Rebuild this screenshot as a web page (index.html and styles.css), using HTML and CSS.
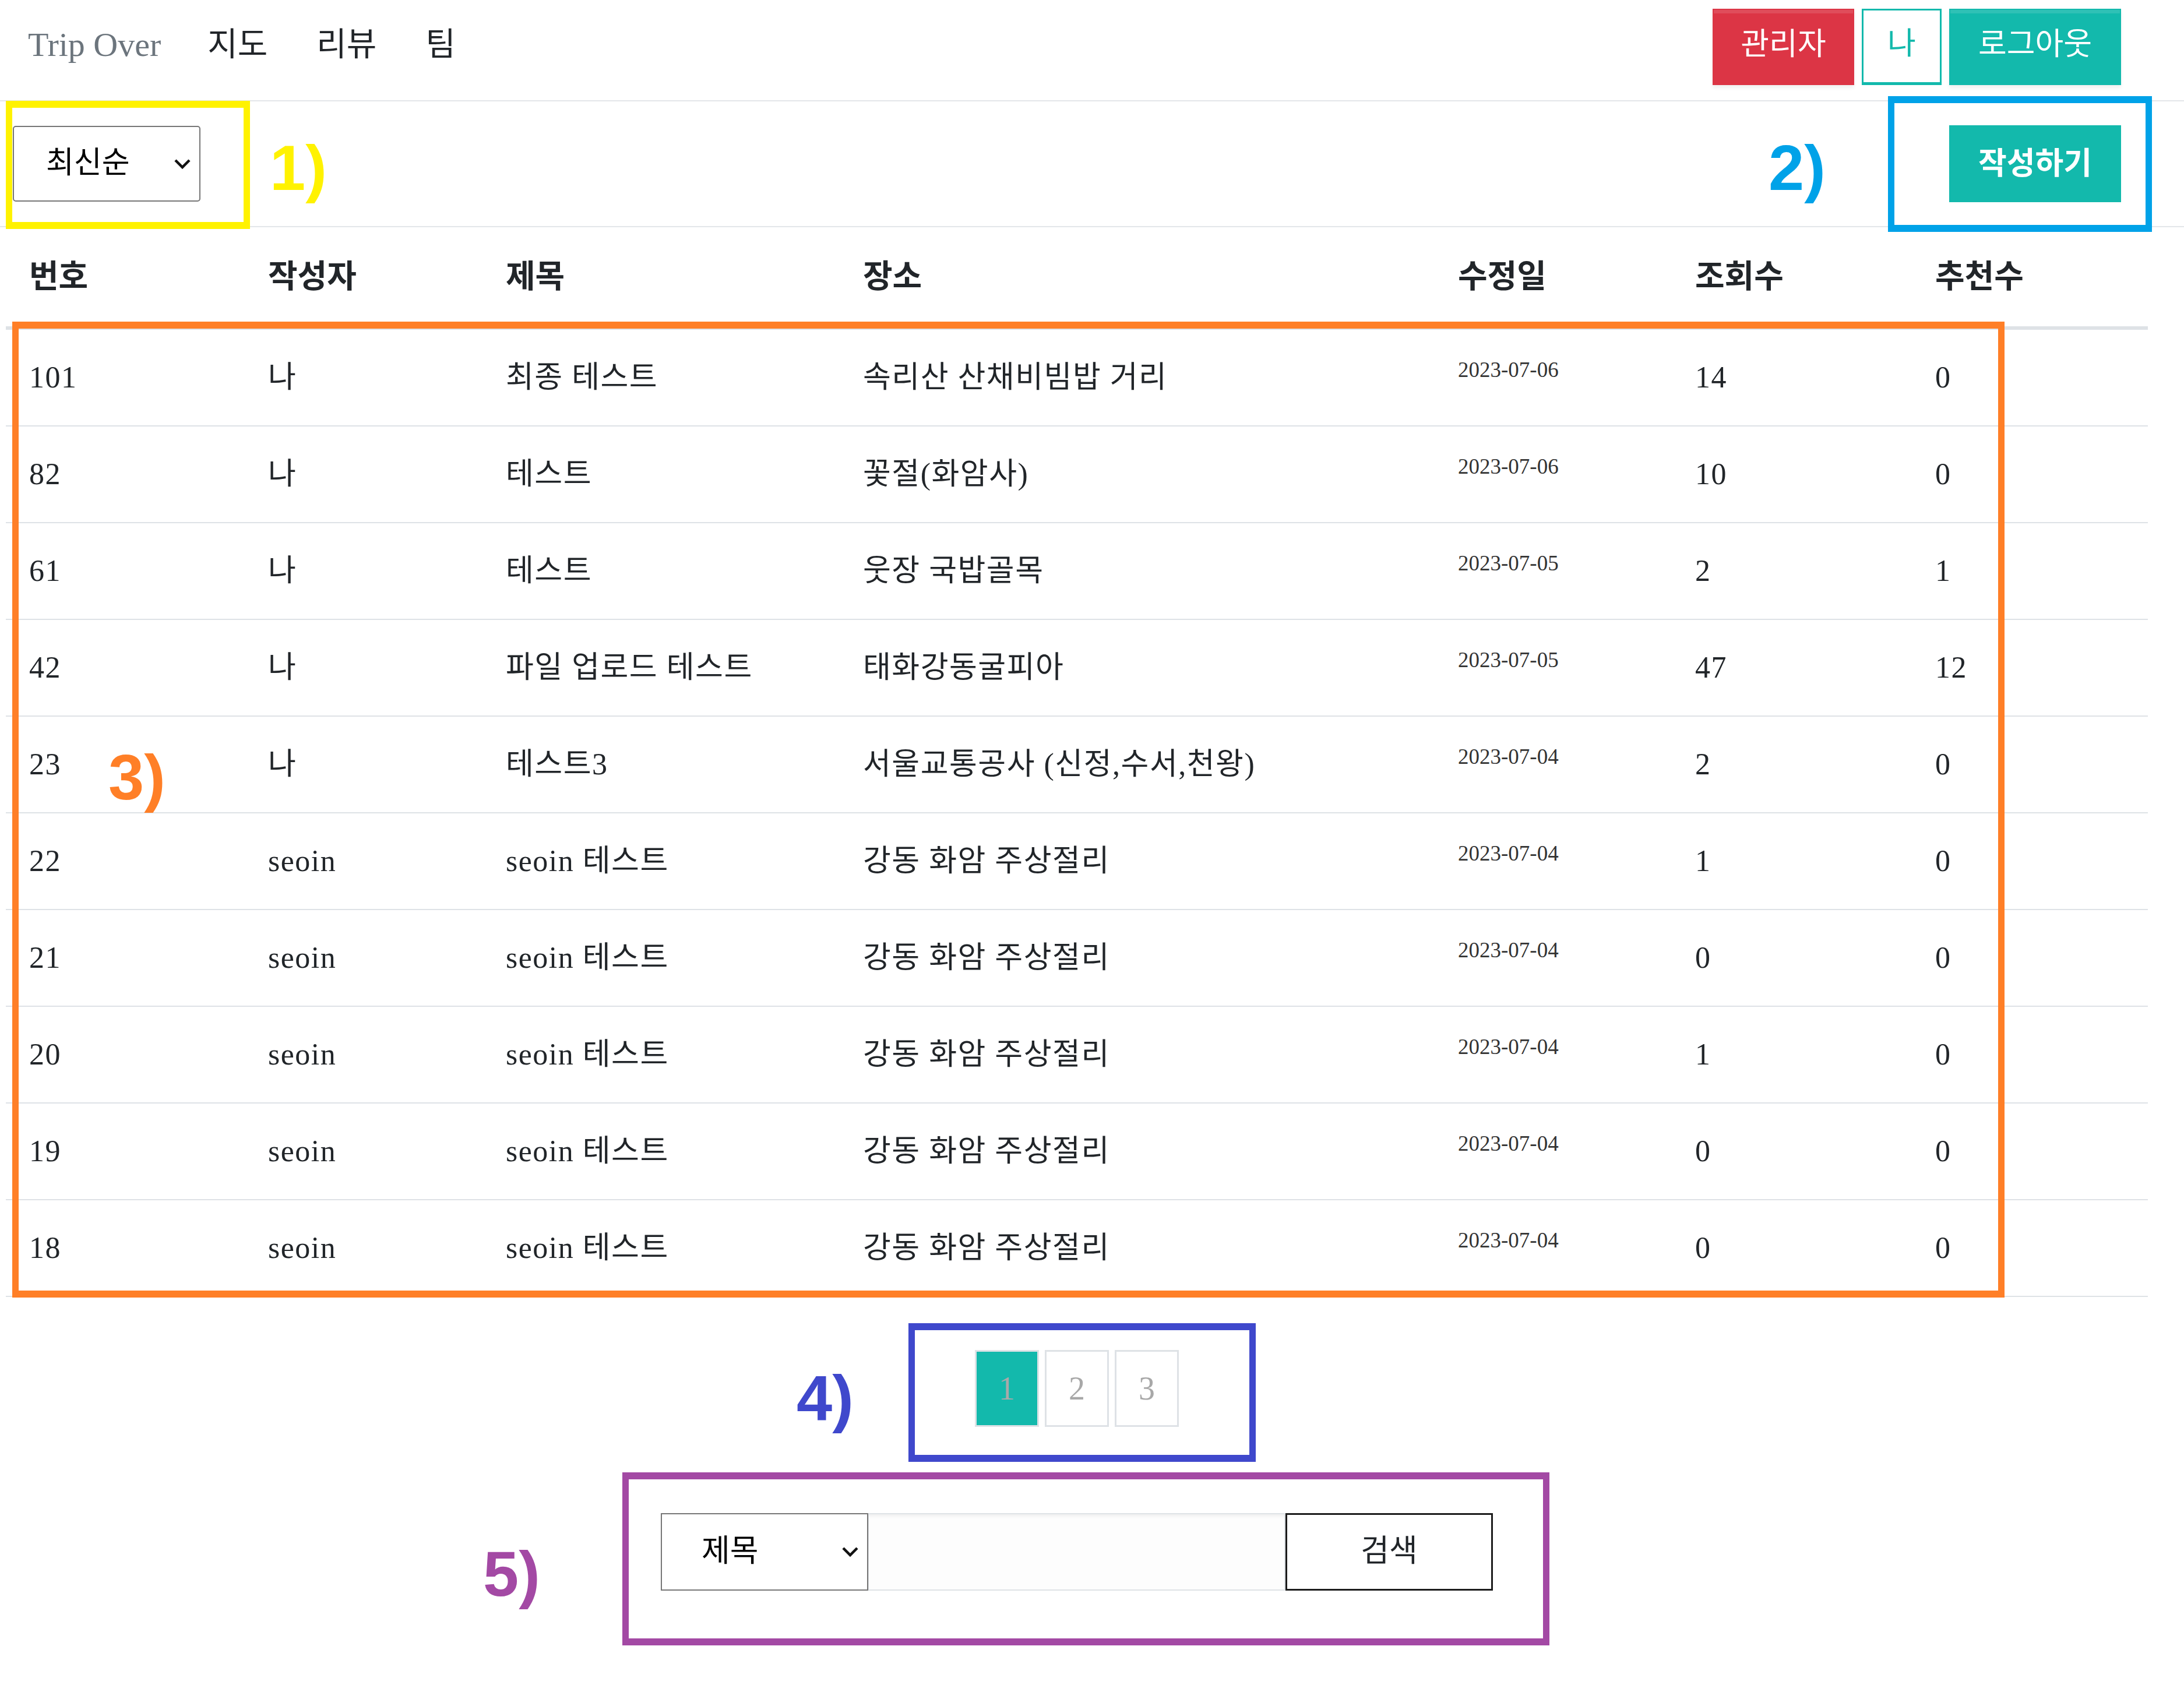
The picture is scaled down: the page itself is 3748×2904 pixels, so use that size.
FILE: index.html
```html
<!DOCTYPE html>
<html lang="ko">
<head>
<meta charset="utf-8">
<title>Trip Over - 리뷰</title>
<link rel="stylesheet" href="styles.css">
</head>
<body>
<div class="page">
  <header class="topnav">
    <a class="brand" href="#">Trip Over</a>
    <ul class="menu">
      <li><a href="#">지도</a></li>
      <li><a href="#">리뷰</a></li>
      <li><a href="#">팀</a></li>
    </ul>
    <div class="account">
      <button class="btn btn-danger btn-admin" type="button">관리자</button>
      <button class="btn btn-outline" type="button">나</button>
      <button class="btn btn-teal btn-logout" type="button">로그아웃</button>
    </div>
  </header>

  <div class="toolbar">
    <div class="select sort-select">
      <span class="select-label">최신순</span>
      <svg class="chev" width="30" height="19" viewBox="0 0 30 19"><path d="M3 3 L15 15 L27 3" fill="none" stroke="#111" stroke-width="4.5"/></svg>
    </div>
    <button class="btn btn-teal btn-write" type="button">작성하기</button>
  </div>

  <table class="board">
    <colgroup>
      <col class="c-no"><col class="c-writer"><col class="c-title"><col class="c-place"><col class="c-date"><col class="c-views"><col class="c-likes">
    </colgroup>
    <thead>
      <tr><th>번호</th><th>작성자</th><th>제목</th><th>장소</th><th>수정일</th><th>조회수</th><th>추천수</th></tr>
    </thead>
    <tbody>
      <tr><td>101</td><td>나</td><td>최종 테스트</td><td>속리산 산채비빔밥 거리</td><td><span class="date">2023-07-06</span></td><td>14</td><td>0</td></tr>
      <tr><td>82</td><td>나</td><td>테스트</td><td>꽃절(화암사)</td><td><span class="date">2023-07-06</span></td><td>10</td><td>0</td></tr>
      <tr><td>61</td><td>나</td><td>테스트</td><td>웃장 국밥골목</td><td><span class="date">2023-07-05</span></td><td>2</td><td>1</td></tr>
      <tr><td>42</td><td>나</td><td>파일 업로드 테스트</td><td>태화강동굴피아</td><td><span class="date">2023-07-05</span></td><td>47</td><td>12</td></tr>
      <tr><td>23</td><td>나</td><td>테스트3</td><td>서울교통공사 (신정,수서,천왕)</td><td><span class="date">2023-07-04</span></td><td>2</td><td>0</td></tr>
      <tr><td>22</td><td>seoin</td><td>seoin 테스트</td><td>강동 화암 주상절리</td><td><span class="date">2023-07-04</span></td><td>1</td><td>0</td></tr>
      <tr><td>21</td><td>seoin</td><td>seoin 테스트</td><td>강동 화암 주상절리</td><td><span class="date">2023-07-04</span></td><td>0</td><td>0</td></tr>
      <tr><td>20</td><td>seoin</td><td>seoin 테스트</td><td>강동 화암 주상절리</td><td><span class="date">2023-07-04</span></td><td>1</td><td>0</td></tr>
      <tr><td>19</td><td>seoin</td><td>seoin 테스트</td><td>강동 화암 주상절리</td><td><span class="date">2023-07-04</span></td><td>0</td><td>0</td></tr>
      <tr><td>18</td><td>seoin</td><td>seoin 테스트</td><td>강동 화암 주상절리</td><td><span class="date">2023-07-04</span></td><td>0</td><td>0</td></tr>
    </tbody>
  </table>

  <nav class="pagination">
    <a class="page-item active" href="#">1</a>
    <a class="page-item" href="#">2</a>
    <a class="page-item" href="#">3</a>
  </nav>

  <form class="search">
    <div class="select search-select">
      <span class="select-label">제목</span>
      <svg class="chev" width="30" height="19" viewBox="0 0 30 19"><path d="M3 3 L15 15 L27 3" fill="none" stroke="#111" stroke-width="4.5"/></svg>
    </div>
    <input class="search-input" type="text" aria-label="검색어">
    <button class="search-btn" type="button">검색</button>
  </form>

  <div class="annot annot-1"></div>
  <div class="annot annot-2"></div>
  <div class="annot annot-3"></div>
  <div class="annot annot-4"></div>
  <div class="annot annot-5"></div>
  <span class="label label-1">1)</span>
  <span class="label label-2">2)</span>
  <span class="label label-3">3)</span>
  <span class="label label-4">4)</span>
  <span class="label label-5">5)</span>
</div>
</body>
</html>
```

FILE: styles.css
```css
* { box-sizing: border-box; }

html, body {
  margin: 0;
  padding: 0;
  background: #ffffff;
}

body {
  font-family: "Liberation Serif", "Noto Sans CJK KR", serif;
  color: #212529;
}

.page {
  position: relative;
  width: 3748px;
  min-height: 2904px;
}

a { color: inherit; text-decoration: none; }

/* ---------- top navigation ---------- */
.topnav {
  display: flex;
  align-items: center;
  height: 174px;
  padding: 0 108px 11px 48px;
  border-bottom: 2px solid #e3e6e9;
}

.brand {
  font-size: 58px;
  color: #6c757d;
  margin-bottom: 8px;
}

.menu {
  display: flex;
  gap: 84px;
  list-style: none;
  margin: 0 0 20px 80px;
  padding: 0;
  font-size: 56px;
}

.account {
  margin-left: auto;
  display: flex;
  gap: 13px;
}

.btn {
  display: inline-flex;
  align-items: center;
  justify-content: center;
  height: 131px;
  padding: 0 0 20px;
  font-family: "Noto Sans CJK KR", sans-serif;
  font-size: 53px;
  border: 2px solid transparent;
  border-radius: 0;
  cursor: pointer;
}

.btn-admin { width: 243px; }
.btn-logout { width: 295px; }

.btn-danger {
  background: #dc3545;
  border-color: #dc3545;
  color: #ffffff;
  box-shadow: inset 0 6px 0 rgba(255,255,255,0.12), 0 5px 6px rgba(0,0,0,0.06);
}

.btn-outline {
  background: #ffffff;
  border: 3px solid #13b9ac;
  border-bottom-width: 5px;
  color: #13b9ac;
  width: 137px;
}

.btn-teal {
  background: #13b9ac;
  border-color: #13b9ac;
  color: #ffffff;
  box-shadow: inset 0 6px 0 rgba(255,255,255,0.12), 0 5px 6px rgba(0,0,0,0.06);
}

/* ---------- toolbar ---------- */
.toolbar {
  display: flex;
  align-items: center;
  justify-content: space-between;
  height: 216px;
  padding: 0 108px 0 22px;
  border-bottom: 2px solid #e3e6e9;
}

.select {
  display: flex;
  align-items: center;
  justify-content: space-between;
  height: 130px;
  border: 2px solid #767676;
  background: #ffffff;
  font-family: "Noto Sans CJK KR", sans-serif;
  color: #000000;
}

.select-label { margin-bottom: 14px; }

.sort-select {
  width: 322px;
  border-radius: 5px;
  padding: 0 14px 0 55px;
  font-size: 52px;
}

.btn-write {
  width: 295px;
  height: 132px;
  font-weight: 700;
  box-shadow: none;
  padding-bottom: 10px;
}

/* ---------- board table ---------- */
.board {
  margin-left: 10px;
  width: 3676px;
  table-layout: fixed;
  border-collapse: separate;
  border-spacing: 0;
}

.c-no { width: 410px; }
.c-writer { width: 408px; }
.c-title { width: 613px; }
.c-place { width: 1021px; }
.c-date { width: 407px; }
.c-views { width: 412px; }
.c-likes { width: 405px; }

.board th {
  height: 176px;
  padding: 0 0 0 40px;
  text-align: left;
  vertical-align: middle;
  font-size: 55px;
  line-height: 1.2;
  font-weight: 700;
  border-bottom: 6px solid #dee2e6;
  white-space: nowrap;
}

.board td {
  height: 166px;
  padding: 0 0 0 40px;
  vertical-align: middle;
  font-size: 52px;
  letter-spacing: 1.5px;
  line-height: 1.2;
  border-bottom: 2px solid #dee2e6;
  white-space: nowrap;
}

.date {
  font-size: 37px;
  letter-spacing: 0;
  line-height: 1;
  vertical-align: 19px;
  color: #333333;
}

/* ---------- pagination ---------- */
.pagination {
  display: flex;
  justify-content: center;
  gap: 10px;
  margin: 91px 0 0 10px;
  width: 3676px;
}

.page-item {
  display: flex;
  align-items: center;
  justify-content: center;
  width: 110px;
  height: 132px;
  border: 3px solid #dee2e6;
  font-size: 56px;
  color: #a8a8a8;
  background: #ffffff;
}

.page-item.active {
  background: #13b9ac;
  border-color: #dee2e6;
  color: #a9a9a9;
}

/* ---------- search ---------- */
.search {
  display: flex;
  justify-content: center;
  margin: 148px 0 0 10px;
  width: 3676px;
}

.search-select {
  width: 356px;
  height: 133px;
  padding: 0 14px 0 68px;
  font-size: 53px;
}

.search-input {
  width: 716px;
  height: 133px;
  margin: 0;
  border: 2px solid #dee2e6;
  border-left-width: 1px;
  background: #fdfdfd;
  box-shadow: inset 0 7px 5px -3px rgba(0,0,0,0.05);
  outline: none;
}

.search-btn {
  width: 356px;
  height: 133px;
  margin: 0;
  padding: 0 0 14px;
  border: 3px solid #1c1c1c;
  background: #ffffff;
  color: #212529;
  font-family: "Noto Sans CJK KR", sans-serif;
  font-size: 53px;
}

/* ---------- annotation overlays ---------- */
.annot {
  position: absolute;
  border-style: solid;
  border-width: 12px 11px;
  pointer-events: none;
}

.annot-1 { left: 10px; top: 173px; width: 419px; height: 220px; border-color: #fff200; }
.annot-2 { left: 3240px; top: 165px; width: 453px; height: 233px; border-color: #00a2e8; }
.annot-3 { left: 21px; top: 552px; width: 3419px; height: 1675px; border-color: #ff7f27; }
.annot-4 { left: 1559px; top: 2271px; width: 596px; height: 238px; border-color: #3f48cc; }
.annot-5 { left: 1068px; top: 2527px; width: 1591px; height: 297px; border-color: #a349a4; }

.label {
  position: absolute;
  font-family: "Liberation Sans", "Noto Sans", sans-serif;
  font-weight: 700;
  font-size: 110px;
  line-height: 1;
}

.label-1 { left: 463px; top: 233px; color: #fff200; }
.label-2 { left: 3035px; top: 233px; color: #00a2e8; }
.label-3 { left: 186px; top: 1279px; color: #ff7f27; }
.label-4 { left: 1367px; top: 2344px; color: #3f48cc; }
.label-5 { left: 829px; top: 2646px; color: #a349a4; }
```
